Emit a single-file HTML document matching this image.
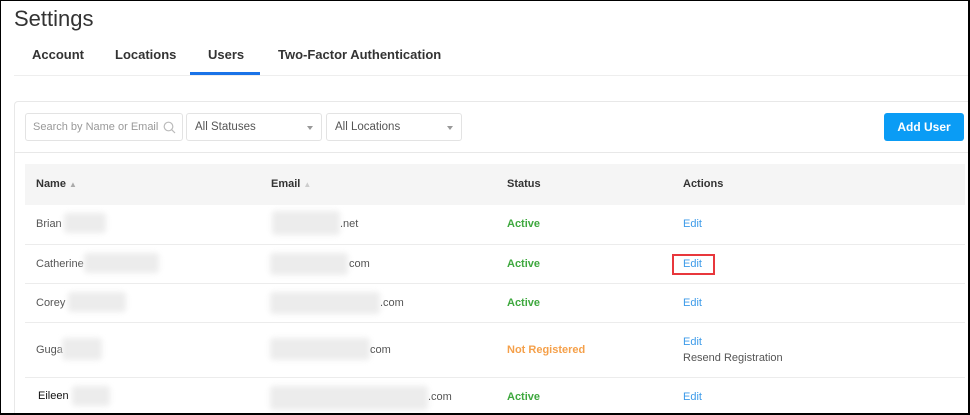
<!DOCTYPE html>
<html style="width:970px;height:415px;overflow:hidden"><head><style>
*{margin:0;padding:0;box-sizing:border-box}
body{width:970px;height:415px;overflow:hidden;background:#fff;font-family:"Liberation Sans",sans-serif;position:relative}
.frame{position:absolute;left:0;top:0;width:970px;height:415px;border:1px solid #000;border-right-width:2px;border-bottom-width:2px;z-index:10;pointer-events:none}
.a{position:absolute;white-space:nowrap}
h1{position:absolute;left:14px;top:6px;font-size:22px;font-weight:normal;color:#333}
.tab{position:absolute;top:47px;font-size:13px;font-weight:bold;color:#333}
.card{position:absolute;left:14px;top:101px;width:960px;height:314px;border:1px solid #e8e8e8;border-bottom:none;border-radius:4px 4px 0 0}
.box{position:absolute;top:113px;height:28px;border:1px solid #e3e3e3;border-radius:3px;font-size:11.5px;color:#555;padding:7px 8px;white-space:nowrap;overflow:hidden}
.caret{position:absolute;right:8px;top:12px;width:0;height:0;border-left:3px solid transparent;border-right:3px solid transparent;border-top:4px solid #999}
.btn{position:absolute;left:884px;top:113px;width:80px;height:28px;background:#0a9cf5;border-radius:3px;color:#fff;font-weight:bold;font-size:12px;text-align:center;line-height:28px}
.hdr{position:absolute;left:25px;top:164px;width:940px;height:41px;background:#f5f5f5}
.th{position:absolute;top:178px;font-size:11px;font-weight:bold;color:#333}
.row{position:absolute;left:25px;width:940px;border-top:1px solid #ececec}
.td{position:absolute;font-size:11px;color:#555}
.st{position:absolute;font-size:11px;font-weight:bold;color:#3ea83e}
.ed{position:absolute;font-size:11px;color:#3d9be9}
.blur{position:absolute;background:#ececec;filter:blur(3px);border-radius:3px}
</style></head><body>
<div class="frame"></div>
<h1>Settings</h1>
<div class="tab" style="left:32px">Account</div>
<div class="tab" style="left:115px">Locations</div>
<div class="tab" style="left:208px">Users</div>
<div class="tab" style="left:278px">Two-Factor Authentication</div>
<div class="a" style="left:190px;top:72px;width:70px;height:3px;background:#1a73e8"></div>
<div class="a" style="left:14px;top:75px;width:956px;height:1px;background:#eee"></div>
<div class="card"></div>
<div class="box" style="left:25px;width:158px;color:#999;padding-left:7px;font-size:11px">Search by Name or Email
<svg style="position:absolute;right:6px;top:7px;background:#fff" width="13" height="13" viewBox="0 0 13 13"><circle cx="5.5" cy="5.5" r="4.3" fill="none" stroke="#bbb" stroke-width="1.2"/><path d="M8.7 8.7L12 12" stroke="#bbb" stroke-width="1.2"/></svg></div>
<div class="box" style="left:186px;width:136px">All Statuses<div class="caret"></div></div>
<div class="box" style="left:326px;width:136px">All Locations<div class="caret"></div></div>
<div class="btn">Add User</div>
<div class="a" style="left:14px;top:152px;width:956px;height:1px;background:#e8e8e8"></div>
<div class="hdr"></div>
<div class="th" style="left:36px">Name <span style="color:#aaa;font-size:8px">▲</span></div>
<div class="th" style="left:271px">Email <span style="color:#ccc;font-size:8px">▲</span></div>
<div class="th" style="left:507px">Status</div>
<div class="th" style="left:683px">Actions</div>

<div class="row" style="top:244px"></div>
<div class="row" style="top:283px"></div>
<div class="row" style="top:322px"></div>
<div class="row" style="top:377px"></div>

<div class="td" style="left:36px;top:218px">Brian</div><div class="blur" style="left:64px;top:213px;width:42px;height:20px"></div>
<div class="blur" style="left:272px;top:211px;width:68px;height:24px"></div><div class="td" style="left:340px;top:218px">.net</div>
<div class="st" style="left:507px;top:218px">Active</div><div class="ed" style="left:683px;top:218px">Edit</div>

<div class="td" style="left:36px;top:258px">Catherine</div><div class="blur" style="left:84px;top:253px;width:75px;height:20px"></div>
<div class="blur" style="left:270px;top:253px;width:78px;height:22px"></div><div class="td" style="left:349px;top:258px">com</div>
<div class="st" style="left:507px;top:258px">Active</div><div class="ed" style="left:683px;top:258px">Edit</div>
<div class="a" style="left:672px;top:254px;width:43px;height:21px;border:2px solid #e8373c"></div>

<div class="td" style="left:36px;top:297px">Corey</div><div class="blur" style="left:68px;top:292px;width:58px;height:20px"></div>
<div class="blur" style="left:270px;top:292px;width:110px;height:22px"></div><div class="td" style="left:380px;top:297px">.com</div>
<div class="st" style="left:507px;top:297px">Active</div><div class="ed" style="left:683px;top:297px">Edit</div>

<div class="td" style="left:36px;top:344px">Guga</div><div class="blur" style="left:62px;top:338px;width:40px;height:22px"></div>
<div class="blur" style="left:270px;top:338px;width:100px;height:22px"></div><div class="td" style="left:370px;top:344px">com</div>
<div class="st" style="left:507px;top:344px;color:#f5a04a">Not Registered</div>
<div class="ed" style="left:683px;top:336px">Edit</div><div class="td" style="left:683px;top:352px">Resend Registration</div>

<div class="td" style="left:38px;top:390px;color:#111">Eileen</div><div class="blur" style="left:72px;top:386px;width:38px;height:20px"></div>
<div class="blur" style="left:270px;top:386px;width:158px;height:24px"></div><div class="td" style="left:428px;top:391px">.com</div>
<div class="st" style="left:507px;top:391px">Active</div><div class="ed" style="left:683px;top:391px">Edit</div>
</body></html>
